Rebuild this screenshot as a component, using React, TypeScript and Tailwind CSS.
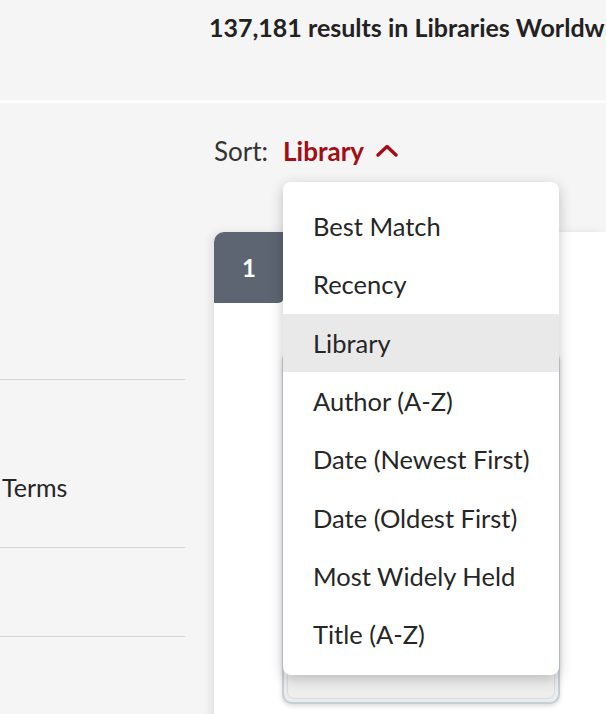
const sortOptions = [
  'Best Match',
  'Recency',
  'Library',
  'Author (A-Z)',
  'Date (Newest First)',
  'Date (Oldest First)',
  'Most Widely Held',
  'Title (A-Z)',
];

function SortMenu({ selected }: { selected: string }) {
  return (
    <div className="absolute left-[69px] top-[79px] z-20">
      {/* the select's own box sitting behind the open list */}
      <div className="absolute left-[-1px] top-[168px] w-[278px] h-[354px] rounded-[10px] border-2 border-[#c6ced8] bg-[#ececec] shadow-[0_2px_4px_rgba(0,0,0,0.15)]">
        <div className="m-[3px] h-[calc(100%-6px)] rounded-[7px] border border-[#d6dbe2] bg-[#eeeeee]" />
      </div>
      <ul className="relative w-[276px] rounded-[8px] bg-white pt-[15px] pb-[12px] shadow-[0_4px_14px_rgba(0,0,0,0.22)]">
        {sortOptions.map((opt) => (
          <li
            key={opt}
            className={`h-[58.3px] flex items-center pl-[30px] text-[25.5px] text-[#262626] ${
              opt === selected ? 'bg-[#e9e9e9]' : ''
            }`}
          >
            {opt}
          </li>
        ))}
      </ul>
    </div>
  );
}

function Sidebar() {
  return (
    <aside className="w-[185px] shrink-0">
      <div className="h-[277px] border-b border-[#d3d3d3]" />
      <div className="h-[168px] border-b border-[#d3d3d3] flex items-center">
        <span className="pl-[2px] pt-[48px] text-[25px] text-[#262626]">Terms</span>
      </div>
      <div className="h-[89px] border-b border-[#d3d3d3]" />
    </aside>
  );
}

export default function App() {
  return (
    <div
      className="w-[606px] h-[714px] overflow-hidden bg-[#f5f5f5] whitespace-nowrap"
      style={{ fontFamily: 'Lato, "Open Sans", sans-serif' }}
    >
      <header className="h-[100px] pl-[209px] pt-[9px]">
        <h1 className="text-[25px] font-bold text-[#222]">137,181 results in Libraries Worldwide</h1>
      </header>
      <div className="h-[3px] bg-white" />

      <div className="flex">
        <Sidebar />
        <main className="ml-[29px] flex-1 min-w-0">
          <div className="relative h-[129px] pt-[29px] flex items-start">
            <span className="text-[26px] text-[#333]">Sort:</span>
            <button className="ml-[15px] flex items-center gap-[12px] text-[26px] font-bold text-[#a30d15]">
              Library
              <svg width="22" height="13" viewBox="0 0 22 13" fill="none" className="mt-[-3px]">
                <polyline
                  points="2,11 11,2.5 20,11"
                  stroke="currentColor"
                  strokeWidth="3.4"
                  strokeLinecap="round"
                  strokeLinejoin="round"
                />
              </svg>
            </button>
            <SortMenu selected="Library" />
          </div>

          <section className="h-[500px] bg-white rounded-tl-[10px] shadow-[-4px_0_8px_rgba(0,0,0,0.08)]">
            <div className="w-[70px] h-[71px] rounded-tl-[10px] rounded-br-[6px] bg-[#5e6572] flex items-center justify-center text-[24px] font-bold text-white">
              1
            </div>
          </section>
        </main>
      </div>
    </div>
  );
}
